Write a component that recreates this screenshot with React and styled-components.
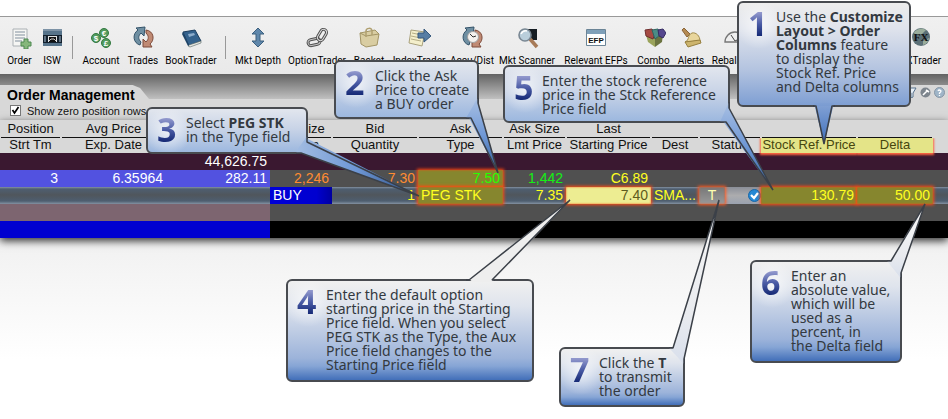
import React from "react";
import styled, { createGlobalStyle, css } from "styled-components";

const Global = createGlobalStyle`
  *, *::before, *::after { box-sizing: border-box; }
  body { margin: 0; background: #fff; font-family: "Liberation Sans", Arial, sans-serif; }
  button { font: inherit; color: inherit; background: none; border: 0; padding: 0; }
`;

const Stage = styled.main`
  position: relative;
  overflow: hidden;
  min-height: 100vh;
  padding-top: 16px;
  background: linear-gradient(#fff 16px, #f1f1f1 17px, #f1f1f1 240px, #fff 360px);
`;

/* ---------- toolbar ---------- */
const Toolbar = styled.nav`
  display: flex;
  align-items: flex-start;
  gap: 10px;
  height: 58px;
  padding: 8px 7px 0;
  border-top: 1px solid #999;
  background: linear-gradient(#f0f0f0, #e9e9e9);
`;
const Tool = styled.button`
  display: flex;
  flex: 0 0 ${(p) => p.$w}px;
  min-width: 0;
  flex-direction: column;
  align-items: center;
  margin-left: ${(p) => (p.$end ? "auto" : 0)};
  gap: 4px;
  font: 10px/16px Roboto, "Liberation Sans", sans-serif;
  color: #000;
  white-space: nowrap;
  svg { width: 24px; height: 24px; flex: none; }
`;
const Divider = styled.span`
  flex: 0 0 1px;
  height: 23px;
  margin-top: 11px;
  background: #999;
`;

const Sheet = ({ children }) => (
  <g>
    <path d="M5 4h14v17H5z" fill="#f6f6f4" stroke="#aab0b4" />
    <path d="M7 7h10M7 10h10M7 13h10M7 16h7" stroke="#a9b2bb" strokeWidth="1.3" />
    {children}
  </g>
);
const Swirl = () => (
  <g>
    <path d="M9 20C2 18 1 9 7 5L5 3l9-1-1 9-3-3c-3 3-3 6 0 9z" fill="#6f8fa2" stroke="#34536a" />
    <path d="M15 5c8 1 9 10 4 14l2 3h-9v-8l3 3c3-3 3-6 0-9z" fill="#c08a74" stroke="#7d4b3a" />
  </g>
);
const Coin = ({ x, y, s }) => (
  <g>
    <circle cx={x} cy={y} r="4.5" fill="#539a5d" stroke="#337a42" />
    <text x={x} y={y + 3} textAnchor="middle" fontSize="8" fontWeight="bold" fill="#fff" fontFamily="Liberation Sans">{s}</text>
  </g>
);
const icons = {
  order: <Sheet><path d="M16 14h4v3h3v4h-3v3h-4v-3h-3v-4h3z" fill="#86b77c" stroke="#4d8850" /></Sheet>,
  isw: (
    <g>
      <path d="M3 4h19v17H3z" fill="#56738a" />
      <path d="M3 4h19v2H3z" fill="#7d93a6" />
      <path d="M3 10h19v8H3z" fill="#13202c" />
      <path d="M8 11h9v6H8z" fill="#e4e6e6" />
      <path d="M9 12h7v5H9z" fill="#111" />
      <path d="M9 16l2-2h3l2 2" fill="none" stroke="#ccc" />
      <path d="M5 11v6M20 11v6" stroke="#a9c1d8" />
    </g>
  ),
  account: <g><Coin x={15} y={8} s="€" /><Coin x={7} y={13} s="$" /><Coin x={17} y={18} s="£" /></g>,
  trades: <Swirl />,
  book: (
    <g>
      <path d="M4 7l12-2 6 11-12 5z" fill="#34628d" stroke="#1c3d5e" />
      <path d="M10 20l12-4v2l-11 4-2-1z" fill="#e6e6e0" stroke="#566" strokeWidth=".6" />
      <path d="M4 7l6 13-1 1L3 9z" fill="#1e4468" />
      <path d="M9 9l6-1 1 2-6 2z" fill="#8caccb" />
    </g>
  ),
  depth: <path d="M12 3l6 6h-4v7h4l-6 6-6-6h4V9H6z" fill="#5f87ab" stroke="#3d607f" />,
  chain: (
    <g fill="none">
      <rect x="3" y="14" width="12" height="6" rx="3" transform="rotate(-12 9 17)" stroke="#505050" strokeWidth="3" />
      <rect x="3" y="14" width="12" height="6" rx="3" transform="rotate(-12 9 17)" stroke="#c4c4c4" strokeWidth="1" />
      <rect x="11" y="7" width="12" height="6" rx="3" transform="rotate(-60 17 10)" stroke="#505050" strokeWidth="3" />
      <rect x="11" y="7" width="12" height="6" rx="3" transform="rotate(-60 17 10)" stroke="#ddd" strokeWidth="1" />
    </g>
  ),
  basket: (
    <g>
      <path d="M3 8l15-3 4 4-2 11-11 2-5-3z" fill="#d9cda2" stroke="#a39566" />
      <path d="M3 8l6 3 13-2" stroke="#a39566" fill="none" />
      <path d="M9 12V6c0-3 6-4 6 0v4" stroke="#b0a070" strokeWidth="1.5" fill="none" />
    </g>
  ),
  index: (
    <g>
      <path d="M4 5l14 2-3 14-13-3z" fill="#f4efcb" stroke="#aaa27d" />
      <path d="M5 8l10 2M4 11l10 2M4 14l10 2" stroke="#b5ad85" />
      <path d="M11 8h6V4l7 7-7 6v-4h-6z" fill="#587ea4" stroke="#36597c" />
    </g>
  ),
  accu: (
    <g>
      <Swirl />
      <circle cx="13" cy="12" r="5.5" fill="#f4f1ee" stroke="#a2a2a2" />
      <path d="M10 9l3 3 3-1" fill="none" stroke="#333" />
    </g>
  ),
  scanner: (
    <g>
      <path d="M12 4h10v11H12z" fill="#151c22" />
      <path d="M15 14l7 8" stroke="#a77a57" strokeWidth="3.5" />
      <circle cx="10" cy="10" r="6" fill="#b9cedb" stroke="#798793" strokeWidth="1.6" />
      <path d="M6 9q2-4 6-3" fill="none" stroke="#fff" strokeWidth="1.5" />
    </g>
  ),
  efp: (
    <g>
      <path d="M2.5 4.5h19v16h-19z" fill="#fff" stroke="#6b8496" />
      <path d="M3 5h18v4H3z" fill="#7fa0b9" />
      <text x="12" y="18" textAnchor="middle" fontSize="8" fontWeight="bold" fontFamily="Liberation Sans" fill="#111">EFP</text>
    </g>
  ),
  combo: (
    <g>
      <path d="M4 10l9 3v9l-7-5z" fill="#9aa35b" />
      <path d="M13 13l8-5-1 9-7 5z" fill="#6b7340" />
      <path d="M3 5l7-1 3 4-2 6-7-3z" fill="#a54a43" stroke="#6f2f2f" />
      <path d="M10 5l6-1 2 6-5 4z" fill="#4b8c86" stroke="#306561" />
      <path d="M16 5l5-1 3 4-3 5-4-2z" fill="#55478e" stroke="#352c62" />
    </g>
  ),
  alerts: (
    <g>
      <path d="M3 5l2-2 6 6-3 3z" fill="#b58a52" stroke="#8a6538" />
      <path d="M6 17c5-2 2-7 7-9 4-1 8 3 8 8z" fill="#e9d69c" stroke="#a28b4d" />
      <path d="M6 17l15-2 1 3-13 4z" fill="#cdb56e" stroke="#97803f" />
    </g>
  ),
  gauge: (
    <g>
      <path d="M2 17a10 10 0 0 1 20 0z" fill="#eee" stroke="#777" strokeWidth="1.4" />
      <path d="M12 16L8 10M12 16l6-3" stroke="#444" />
    </g>
  ),
  fx: (
    <g>
      <circle cx="12" cy="12" r="9" fill="#5b7077" />
      <path d="M5 7q6-6 12-2l-4 4-7 1zM14 16l6-3q-1 6-6 7z" fill="#9aad9c" />
      <text x="12" y="16" textAnchor="middle" fontSize="11" fontWeight="bold" fontFamily="Liberation Serif" fill="#111">FX</text>
    </g>
  ),
};

const tools = [
  ["Order", "order", 25], ["ISW", "isw", 20], null,
  ["Account", "account", 36], ["Trades", "trades", 28], ["BookTrader", "book", 48], null,
  ["Mkt Depth", "depth", 44], ["OptionTrader", "chain", 54], ["Basket", "basket", 30],
  ["IndexTrader", "index", 50], ["Accu/Dist", "accu", 36], ["Mkt Scanner", "scanner", 54],
  ["Relevant EFPs", "efp", 64], ["Combo", "combo", 31], ["Alerts", "alerts", 24],
  ["Rebalance", "gauge", 44],
];

/* ---------- panel ---------- */
const PanelTop = styled.header`
  display: flex;
  justify-content: space-between;
  align-items: flex-end;
  height: 25px;
  background: linear-gradient(#626262, #c0c0c0);
`;
const Tab = styled.h1`
  position: relative;
  z-index: 1;
  width: 149px;
  height: 14px;
  margin: 0;
  padding-left: 7px;
  font: bold 14px/20px "Liberation Sans", Arial, sans-serif;
  white-space: nowrap;
  &::before {
    content: "";
    position: absolute;
    inset: 0;
    z-index: -1;
    background: #d8d8d8;
    clip-path: polygon(0 0, 89% 0, 94% 3px, 100% 100%, 0 100%);
  }
`;
const BarIcons = styled.div`
  display: flex;
  align-items: center;
  justify-content: flex-end;
  gap: 3px;
  width: 64px;
  height: 14px;
  padding-right: 3px;
  background: #d8d8d8;
  button, svg { display: block; width: 11px; height: 11px; }
`;
const PanelBar = styled.div`
  display: flex;
  align-items: center;
  height: 21px;
  padding: 2px 10px 0;
  background: #d8d8d8;
`;
const Check = styled.label`
  display: flex;
  align-items: center;
  gap: 6px;
  font-size: 11px;
  line-height: 18px;
  color: #111;
  input {
    appearance: none;
    width: 11px;
    height: 11px;
    margin: 0;
    border: 1px solid #777;
    background: #fff url("data:image/svg+xml,%3Csvg xmlns='http://www.w3.org/2000/svg' viewBox='0 0 9 9'%3E%3Cpath d='M1.5 4l2 3 4-6' fill='none' stroke='black' stroke-width='1.7'/%3E%3C/svg%3E");
  }
`;

const Grid = styled.table`
  width: 100%;
  table-layout: fixed;
  border-collapse: separate;
  border-spacing: 0;
  box-shadow: 0 3px 8px #333;
  white-space: nowrap;
`;
const Col = styled.col`width: ${(p) => (p.$w ? `${p.$w}px` : "auto")};`;
const HeadCell = styled.th`
  height: ${(p) => (p.$top ? 18 : 15)}px;
  padding: 0;
  background: #d8d8d8;
  color: #111;
  font-size: 13px;
  font-weight: normal;
  line-height: ${(p) => (p.$top ? 17 : 14)}px;
  span {
    display: block;
    height: 100%;
    margin: 0 1px;
    ${(p) => p.$top && css`height: 18px; border-bottom: 1px solid #111;`}
  }
  ${(p) => p.$mark && css`
    position: relative;
    background: #e4e488;
    color: #46460f;
    box-shadow: 0 1px 2px 1px #ff6540;
    clip-path: inset(0 ${p.$mark === "end" ? -4 : 0}px -4px ${p.$mark === "start" ? -4 : 0}px);
    span { margin: 0; }
  `}
`;
const tones = {
  position: { bg: "#5252e0", fg: "#fff" },
  plain: { bg: "#505050", fg: "#fff" },
  size: { bg: "#505050", fg: "#ff8c32" },
  green: { bg: "#505050", fg: "#14f014" },
  last: { bg: "#505050", fg: "#ffff20" },
  edit: { bg: "transparent", fg: "#ffff20" },
  buy: { bg: "linear-gradient(90deg, #0000d8, #0000d0 75%, #0000a0)", fg: "#fff" },
  mark: { bg: "#86862e", fg: "#ffff20", hot: true },
  markGreen: { bg: "#86862e", fg: "#28ff00", hot: true },
  bright: { bg: "#eded92", fg: "#5d5b20", hot: true },
  total: { bg: "transparent", fg: "#fff" },
  mauve: { bg: "#7d6570", fg: "#fff" },
  blue: { bg: "#0000d0", fg: "#fff" },
  black: { bg: "#000", fg: "#fff" },
};
const Cell = styled.td`
  height: 17px;
  padding: 0 3px;
  overflow: hidden;
  font-size: 14px;
  line-height: 17px;
  text-align: ${(p) => p.$align || "right"};
  background: ${(p) => tones[p.$tone].bg};
  color: ${(p) => tones[p.$tone].fg};
  ${(p) => tones[p.$tone].hot && css`
    position: relative;
    box-shadow: 0 0 3px 1px #ff4a10, inset 0 0 2px #ff4a10;
  `}
`;
const Row = styled.tr`
  background: ${(p) => p.$bg || "#505050"};
`;
const editBg = "linear-gradient(#8492a2 0, #4e5e70 2px, #50565c 8px, #4e5e70 14px, #8492a2 17px)";
const StatusCell = styled.td`
  height: 17px;
  padding: 0;
  background: linear-gradient(#8a8e98, #acacae 50%, #9aa2b0);
`;
const StatusInner = styled.div`
  display: flex;
  align-items: center;
  justify-content: space-between;
  height: 17px;
  svg { width: 13px; height: 13px; }
`;
const Transmit = styled.button`
  width: 26px;
  height: 17px;
  background: linear-gradient(#777, #999);
  box-shadow: 0 0 3px 1px #ff5a20, inset 0 0 2px #ff5a20;
  color: #ffffb0;
  font-size: 14px;
  line-height: 17px;
`;

const widths = [61, 105, 104, 62, 86, 85, 63, 85, 48, 62, 96, 76, null];
const head1 = ["Position", "Avg Price", "", "Bid Size", "Bid", "Ask", "Ask Size", "Last", "", "", "", "", null];
const head2 = ["Strt Tm", "Exp. Date", "", "Action", "Quantity", "Type", "Lmt Price", "Starting Price", "Dest", "Status", "Stock Ref. Price", "Delta", null];

/* ---------- callouts ---------- */
const skins = {
  upper: "linear-gradient(#e2e6ee, #c9d4e7 45%, #9db8df)",
  tall: "linear-gradient(#ededed 0, #dfe3ec 25%, #b4c4e0 65%, #7f9fd3)",
  low: "linear-gradient(#f0f0f0 0, #dfe4ed 25%, #9cb3da 78%, #86a5d5 86%, #426fb9)",
};
const Bubble = styled.aside`
  position: absolute;
  left: ${(p) => p.$x}px;
  top: ${(p) => p.$y}px;
  display: flex;
  width: ${(p) => p.$w}px;
  height: ${(p) => p.$h}px;
  padding: 7px 0 0 9px;
  border: 2px solid #484b50;
  border-radius: 6px;
  background: radial-gradient(circle at 20px 22px, #ffffffb0, #fff0 24px), ${(p) => skins[p.$skin]};
  color: #333940;
`;
const Step = styled.strong`
  flex: 0 0 ${(p) => p.$w}px;
  height: 28px;
  background: linear-gradient(#9097cc 10%, #4a5ba5 50%, #182c78 90%);
  background-clip: text;
  color: transparent;
  font: bold 34px/26px "Noto Sans", "Open Sans", sans-serif;
`;
const Note = styled.p`
  margin: 0;
  font: 14px/14px "Noto Sans", "Open Sans", sans-serif;
  white-space: nowrap;
`;
const Tails = styled.svg`
  position: absolute;
  left: 0;
  top: 0;
  width: 948px;
  height: 419px;
  pointer-events: none;
`;

const callouts = [
  { n: 1, x: 737, y: 1, w: 174, h: 106, s: 28, skin: "tall", text: <>Use the <b>Customize<br />Layout &gt; Order<br />Columns</b> feature<br />to display the<br />Stock Ref. Price<br />and Delta columns</> },
  { n: 2, x: 334, y: 60, w: 145, h: 59, s: 30, skin: "upper", text: <>Click the Ask<br />Price to create<br />a BUY order</> },
  { n: 3, x: 146, y: 107, w: 162, h: 47, s: 29, skin: "upper", text: <>Select <b>PEG STK</b><br />in the Type field</> },
  { n: 4, x: 286, y: 279, w: 248, h: 103, s: 29, skin: "low", text: <>Enter the default option<br />starting price in the Starting<br />Price field. When you select<br />PEG STK as the Type, the Aux<br />Price field changes to the<br />Starting Price field</> },
  { n: 5, x: 503, y: 65, w: 227, h: 58, s: 28, skin: "upper", text: <>Enter the stock reference<br />price in the Stck Reference<br />Price field</> },
  { n: 6, x: 750, y: 260, w: 152, h: 103, s: 30, skin: "low", text: <>Enter an<br />absolute value,<br />which will be<br />used as a<br />percent, in<br />the Delta field</> },
  { n: 7, x: 559, y: 347, w: 126, h: 60, s: 29, skin: "low", text: <>Click the <b>T</b><br />to transmit<br />the order</> },
];
/* fill polygon, then the open outline drawn over it */
const tails = [
  { body: "814,103 834,103", line: "M813 106L816 106L824 144L832 106L835 106", tip: "824,144", fill: "url(#tailBlue1)" },
  { body: "476,100 468,116", line: "M478 98V103L498 173L471 118H466", tip: "498,173", fill: "url(#tailBlue2)" },
  { body: "306,138 296,151", line: "M307 136V142L419 196L301 153H296", tip: "419,196", fill: "url(#tailBlue3)" },
  { body: "469,282 492,282", line: "M466 280H469L570 200L492 280H495", tip: "570,200", fill: "#eeeeee" },
  { body: "728,106 722,120", line: "M729 102V108L773 190L726 122H720", tip: "773,190", fill: "url(#tailBlue2)" },
  { body: "889,263 900,277", line: "M887 261H891L925 204L901 273V278", tip: "925,204", fill: "url(#tailLight)" },
  { body: "673,350 683,364", line: "M669 348H673L719 200L684 359V364", tip: "719,200", fill: "url(#tailLight)" },
];

export default function App() {
  return (
    <Stage>
      <Global />
      <Toolbar aria-label="Main toolbar">
        {tools.map((t, i) =>
          t ? (
            <Tool key={t[0]} $w={t[2]}>
              <svg viewBox="0 0 24 24" aria-hidden="true">{icons[t[1]]}</svg>
              {t[0]}
            </Tool>
          ) : (
            <Divider key={i} />
          )
        )}
        <Tool $w={40} $end>
          <svg viewBox="0 0 24 24" aria-hidden="true">{icons.fx}</svg>
          FXTrader
        </Tool>
      </Toolbar>

      <PanelTop>
        <Tab>Order Management</Tab>
        <BarIcons>
          <button aria-label="Filter"><svg viewBox="0 0 11 11"><path d="M1 1h9L7 6v4l-2 1V6z" fill="#e8f0f8" stroke="#56708a" /></svg></button>
          <button aria-label="Configure"><svg viewBox="0 0 11 11"><circle cx="5.5" cy="5.5" r="5" fill="#7d858d" /><path d="M3 8l4-4M6 3l3 2" stroke="#fff" strokeWidth="1.6" /></svg></button>
          <button aria-label="Help"><svg viewBox="0 0 11 11"><circle cx="5.5" cy="5.5" r="5" fill="#9fb5c8" stroke="#8796a5" /><path d="M4 4q1-2 3 0 0 1-1.500 2v1M5.500 8v1" stroke="#fff" fill="none" strokeWidth="1.3" /></svg></button>
        </BarIcons>
      </PanelTop>
      <PanelBar>
        <Check><input type="checkbox" defaultChecked />Show zero position rows</Check>
      </PanelBar>

      <Grid>
        <colgroup>{widths.map((w, i) => <Col key={i} $w={w} />)}</colgroup>
        <thead>
          <tr>
            {head1.map((h, i) => <HeadCell key={i} $top={h !== null}>{h !== null && <span>{h}</span>}</HeadCell>)}
          </tr>
          <tr>
            {head2.map((h, i) => (
              <HeadCell key={i} $mark={i === 10 ? "start" : i === 11 ? "end" : undefined}>{h && <span>{h}</span>}</HeadCell>
            ))}
          </tr>
        </thead>
        <tbody>
          <Row $bg="#3a1830">
            <Cell $tone="total" colSpan={3}>44,626.75</Cell>
            <Cell $tone="total" colSpan={10} />
          </Row>
          <Row>
            <Cell $tone="position">3</Cell>
            <Cell $tone="position">6.35964</Cell>
            <Cell $tone="position">282.11</Cell>
            <Cell $tone="size">2,246</Cell>
            <Cell $tone="size">7.30</Cell>
            <Cell $tone="markGreen">7.50</Cell>
            <Cell $tone="green">1,442</Cell>
            <Cell $tone="last">C6.89</Cell>
            <Cell $tone="plain" colSpan={5} />
          </Row>
          <Row $bg={editBg}>
            <Cell $tone="edit" colSpan={3} />
            <Cell $tone="buy" $align="left">BUY</Cell>
            <Cell $tone="edit">1</Cell>
            <Cell $tone="mark" $align="left">PEG STK</Cell>
            <Cell $tone="edit">7.35</Cell>
            <Cell $tone="bright">7.40</Cell>
            <Cell $tone="edit" $align="left">SMA...</Cell>
            <StatusCell>
              <StatusInner>
                <Transmit>T</Transmit>
                <svg viewBox="0 0 13 13" role="img" aria-label="Ready">
                  <circle cx="6.5" cy="6.5" r="6" fill="#2688d4" stroke="#1767a8" />
                  <path d="M3 6l3 3 4-5" fill="none" stroke="#fff" strokeWidth="2.2" />
                </svg>
              </StatusInner>
            </StatusCell>
            <Cell $tone="mark">130.79</Cell>
            <Cell $tone="mark">50.00</Cell>
            <Cell $tone="edit" />
          </Row>
          <Row>
            <Cell $tone="mauve" colSpan={3} />
            <Cell $tone="plain" colSpan={10} />
          </Row>
          <Row>
            <Cell $tone="blue" colSpan={3} />
            <Cell $tone="black" colSpan={10} />
          </Row>
        </tbody>
      </Grid>

      {callouts.map((c) => (
        <Bubble key={c.n} $x={c.x} $y={c.y} $w={c.w} $h={c.h} $skin={c.skin}>
          <Step $w={c.s}>{c.n}</Step>
          <Note>{c.text}</Note>
        </Bubble>
      ))}
      <Tails viewBox="0 0 948 419" aria-hidden="true">
        <defs>
          <linearGradient id="tailBlue1" x1="0" y1="0" x2="0" y2="1"><stop stopColor="#7f9fd3" /><stop offset="1" stopColor="#3f70bd" /></linearGradient>
          <linearGradient id="tailBlue2" x1="0" y1="0" x2="0" y2="1"><stop stopColor="#a9c0e3" /><stop offset=".5" stopColor="#6f98d6" /><stop offset="1" stopColor="#315c9c" /></linearGradient>
          <linearGradient id="tailBlue3" x1="0" y1="0" x2="1" y2="0"><stop stopColor="#a2bce2" /><stop offset=".5" stopColor="#6d96d5" /><stop offset="1" stopColor="#28497c" /></linearGradient>
          <linearGradient id="tailLight" x1="0" y1="0" x2="0" y2="1"><stop stopColor="#f6f6f6" /><stop offset=".7" stopColor="#e9ebef" /><stop offset="1" stopColor="#d8dfec" /></linearGradient>
        </defs>
        {tails.map((t) => (
          <g key={t.tip}>
            <polygon points={`${t.body} ${t.tip}`} fill={t.fill} />
            <path d={t.line} fill={t.fill} stroke="#3b4048" strokeWidth="1.5" strokeLinejoin="bevel" />
          </g>
        ))}
      </Tails>
    </Stage>
  );
}
